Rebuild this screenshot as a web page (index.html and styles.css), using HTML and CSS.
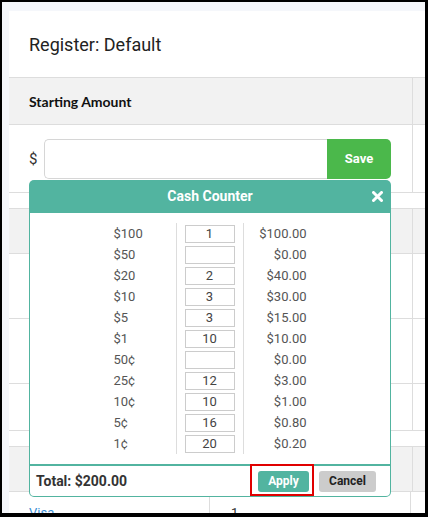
FILE: index.html
```html
<!DOCTYPE html>
<html lang="en">
  <head>
    <meta charset="UTF-8" />
    <title>Register: Default</title>
    <link rel="stylesheet" href="styles.css">
  </head>
  <body>
    <div class="frame">
      <div class="card">
        <h1 class="title">Register: Default</h1>

        <!-- starting amount -->
        <div class="tbl">
          <div class="row head"><div class="c1">Starting Amount</div><div class="c2"></div></div>
          <div class="row amount">
            <div class="c1">
              <span class="cur">$</span>
              <input class="amount-input" />
              <button class="save">Save</button>
            </div>
            <div class="c2"></div>
          </div>
        </div>

        <!-- tenders (behind the counter) -->
        <div class="tbl">
          <div class="row head"><div class="c1"></div><div class="c2"></div></div>
          <div class="row tall"><div class="c1"></div><div class="c2"></div></div>
          <div class="row tall"><div class="c1"></div><div class="c2"></div></div>
          <div class="row short"><div class="c1"></div><div class="c2"></div></div>
        </div>

        <div class="tbl">
          <div class="row head"><div class="c1"></div><div class="c2"></div></div>
          <div class="row">
            <div class="c-half"><a href="#">Visa</a></div>
            <div class="c-half">1</div>
            <div class="c2"></div>
          </div>
        </div>

        <!-- cash counter popup -->
        <div class="counter">
          <div class="counter-head">
            Cash Counter
            <svg class="close" width="11" height="11" viewBox="0 0 11 11">
              <path d="M1.5 1.5 L9.5 9.5 M9.5 1.5 L1.5 9.5" stroke="#fff" stroke-width="3" stroke-linecap="round" />
            </svg>
          </div>
          <div class="counter-body">
            <table class="coins">
              <tr><td class="den">$100</td><td class="qty"><input value="1" /></td><td class="sum">$100.00</td></tr>
              <tr><td class="den">$50</td><td class="qty"><input value="" /></td><td class="sum">$0.00</td></tr>
              <tr><td class="den">$20</td><td class="qty"><input value="2" /></td><td class="sum">$40.00</td></tr>
              <tr><td class="den">$10</td><td class="qty"><input value="3" /></td><td class="sum">$30.00</td></tr>
              <tr><td class="den">$5</td><td class="qty"><input value="3" /></td><td class="sum">$15.00</td></tr>
              <tr><td class="den">$1</td><td class="qty"><input value="10" /></td><td class="sum">$10.00</td></tr>
              <tr><td class="den">50¢</td><td class="qty"><input value="" /></td><td class="sum">$0.00</td></tr>
              <tr><td class="den">25¢</td><td class="qty"><input value="12" /></td><td class="sum">$3.00</td></tr>
              <tr><td class="den">10¢</td><td class="qty"><input value="10" /></td><td class="sum">$1.00</td></tr>
              <tr><td class="den">5¢</td><td class="qty"><input value="16" /></td><td class="sum">$0.80</td></tr>
              <tr><td class="den">1¢</td><td class="qty"><input value="20" /></td><td class="sum">$0.20</td></tr>
            </table>
          </div>
          <div class="counter-foot">
            <span class="total">Total: $200.00</span>
            <span class="hl"><button class="btn apply">Apply</button></span>
            <button class="btn cancel">Cancel</button>
          </div>
        </div>
      </div>
    </div>
  </body>
</html>
```

FILE: styles.css
```css
body {
  margin: 0;
  font-family: Roboto, "Liberation Sans", sans-serif;
  color: #333;
}
.frame {
  width: 428px;
  height: 517px;
  box-sizing: border-box;
  border-style: solid;
  border-color: #000;
  border-width: 2px 3px 4px 2px;
  background: #f5f7fb;
  padding: 9px 0 0 7px;
  overflow: hidden;
}
.card {
  position: relative;
  width: 440px;
  background: #fff;
}
.title {
  margin: 0;
  height: 66px;
  display: flex;
  align-items: center;
  padding-left: 20px;
  font-size: 18px;
  font-weight: 400;
  color: #222;
}

/* tables */
.tbl {
  border-top: 1px solid #ddd;
}
.tbl + .tbl {
  margin-top: 15px;
}
.row {
  display: flex;
  border-bottom: 1px solid #ddd;
}
.c1 {
  width: 404px;
  box-sizing: border-box;
  border-right: 1px solid #ddd;
  padding-left: 20px;
  display: flex;
  align-items: center;
}
.c2 {
  flex: 1;
}
.head {
  height: 44px;
  background: #f2f2f2;
}
.tbl:first-of-type .head {
  height: 46px;
}
.head .c1 {
  font-family: Lato, sans-serif;
  font-weight: 700;
  font-size: 14px;
  color: #111;
}
.amount {
  height: 67px;
}
.tall {
  height: 64px;
}
.short {
  height: 46px;
}
.cur {
  width: 15px;
  font-size: 15px;
  color: #333;
}
.amount-input {
  width: 283px;
  height: 40px;
  box-sizing: border-box;
  border: 1px solid #d6d6d6;
  border-right: none;
  border-radius: 5px 0 0 5px;
  margin: 0;
}
.save {
  width: 64px;
  height: 40px;
  border: none;
  border-radius: 0 5px 5px 0;
  background: #4bb84b;
  color: #fff;
  font-family: Roboto, sans-serif;
  font-weight: 700;
  font-size: 13px;
}
.c-half {
  width: 201px;
  box-sizing: border-box;
  border-right: 1px solid #ddd;
  padding: 13px 0 0 21px;
  height: 40px;
  font-size: 13px;
  color: #333;
}
.c-half:first-child {
  padding-left: 20px;
}
.c-half a {
  color: #3b8ed4;
  text-decoration: none;
}

/* cash counter */
.counter {
  position: absolute;
  left: 20px;
  top: 169px;
  width: 362px;
}
.counter-head {
  position: relative;
  height: 33px;
  line-height: 33px;
  background: #52b4a0;
  border-radius: 5px 5px 0 0;
  text-align: center;
  color: #fff;
  font-weight: 700;
  font-size: 14px;
}
.close {
  position: absolute;
  right: 8px;
  top: 11px;
}
.counter-body {
  background: #fff;
  border-left: 1px solid #52b4a0;
  border-right: 1px solid #52b4a0;
  padding: 10px 0;
}
.coins {
  margin: 0 auto;
  border-collapse: collapse;
  font-size: 13px;
  color: #555;
}
.coins td {
  height: 21px;
  padding: 0;
}
.den {
  width: 62px;
}
.qty {
  border-left: 1px solid #ddd;
  border-right: 1px solid #ddd;
  padding: 0 8px !important;
}
.qty input {
  display: block;
  width: 50px;
  height: 18px;
  box-sizing: border-box;
  margin: 0;
  padding: 0;
  border: 1px solid #ccc;
  text-align: center;
  font-family: Roboto, sans-serif;
  font-size: 13px;
  color: #444;
}
.sum {
  width: 63px;
  text-align: right;
}
.counter-foot {
  display: flex;
  align-items: center;
  height: 30px;
  background: #fff;
  border: 1px solid #52b4a0;
  border-top: 2px solid #52b4a0;
  border-radius: 0 0 5px 5px;
  padding: 0 14px 0 6px;
}
.total {
  font-weight: 700;
  font-size: 14px;
  color: #333;
  margin-right: auto;
}
.btn {
  height: 21px;
  border: none;
  border-radius: 3px;
  font-family: Roboto, sans-serif;
  font-weight: 700;
  font-size: 12px;
  padding: 0;
}
.apply {
  width: 51px;
  background: #52b4a0;
  color: #fff;
  display: block;
}
.cancel {
  width: 57px;
  margin-left: 10px;
  background: #ccc;
  color: #222;
}
.hl {
  position: relative;
}
.hl::after {
  content: "";
  position: absolute;
  top: -7px;
  bottom: -4px;
  left: -8px;
  right: -5px;
  border: 2px solid #e00000;
}
```
